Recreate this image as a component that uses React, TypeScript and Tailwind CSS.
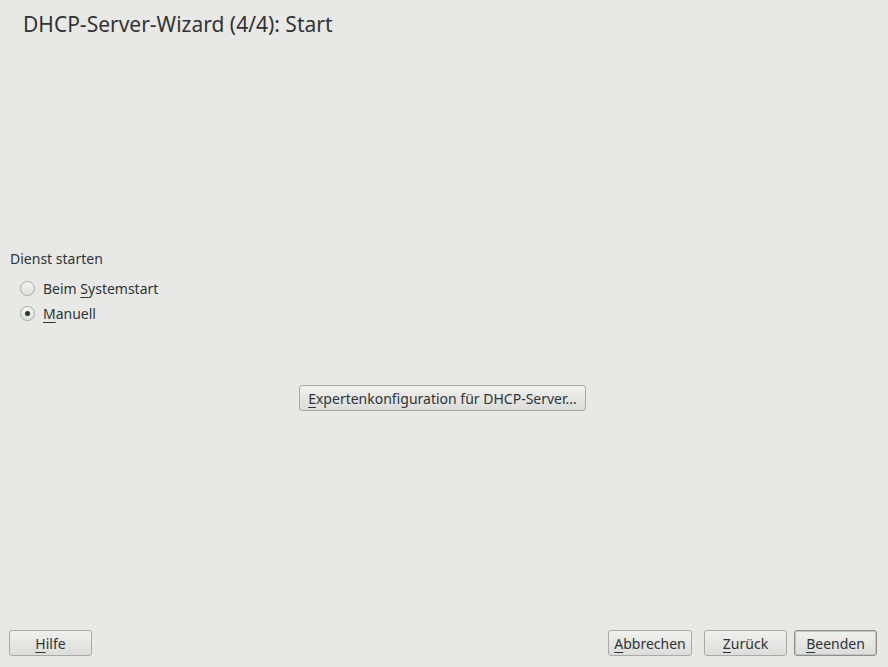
import React from 'react'

function U({ c }: { c: string }) {
  return <span className="underline underline-offset-[3px] decoration-1">{c}</span>
}

function Btn({ children, className = '', def = false }: { children: React.ReactNode; className?: string; def?: boolean }) {
  return (
    <button
      className={`h-[26px] rounded-[3px] border text-[14px] text-[#2e3436] bg-gradient-to-b from-[#f0f0ef] to-[#dcdcdb] ${
        def ? 'border-[#8e8e8c] shadow-[inset_0_0_0_1px_#c4c4c2]' : 'border-[#a9a9a7]'
      } ${className}`}
    >
      {children}
    </button>
  )
}

function Radio({ checked, label }: { checked: boolean; label: React.ReactNode }) {
  return (
    <div className="flex items-center h-[25px] pl-[20px]">
      <span className="w-[15px] h-[15px] rounded-full border border-[#a8a8a6] bg-gradient-to-b from-[#f4f4f3] to-[#e0e0df] flex items-center justify-center">
        {checked && <span className="w-[5px] h-[5px] rounded-full bg-[#2e3436]" />}
      </span>
      <span className="ml-[8px] text-[14px] text-[#2e3436]">{label}</span>
    </div>
  )
}

export default function App() {
  return (
    <div
      className="w-[888px] h-[667px] bg-[#e8e8e7] flex flex-col text-[#2e3436]"
      style={{ fontFamily: '"Noto Sans", "Open Sans", sans-serif' }}
    >
      <h1 className="pl-[23px] pt-[10px] h-[28px] text-[21px] leading-[28px] box-content text-[#333]">DHCP-Server-Wizard (4/4): Start</h1>

      <div className="mt-[211px] pl-[10px] text-[14px] leading-[20px]">Dienst starten</div>
      <div className="mt-[7px] flex flex-col">
        <Radio checked={false} label={<>Beim <U c="S" />ystemstart</>} />
        <Radio checked={true} label={<><U c="M" />anuell</>} />
      </div>

      <div className="mt-[59px] flex justify-center pr-[3px]">
        <Btn className="w-[287px]"><U c="E" />xpertenkonfiguration für DHCP-Server...</Btn>
      </div>

      <div className="mt-auto mb-[11px] flex items-center px-[9px]">
        <Btn className="w-[83px]"><U c="H" />ilfe</Btn>
        <div className="flex-1" />
        <Btn className="w-[84px]"><U c="A" />bbrechen</Btn>
        <Btn className="w-[83px] ml-[12px]"><U c="Z" />urück</Btn>
        <Btn def className="w-[83px] ml-[7px] mr-[2px]"><U c="B" />eenden</Btn>
      </div>
    </div>
  )
}
